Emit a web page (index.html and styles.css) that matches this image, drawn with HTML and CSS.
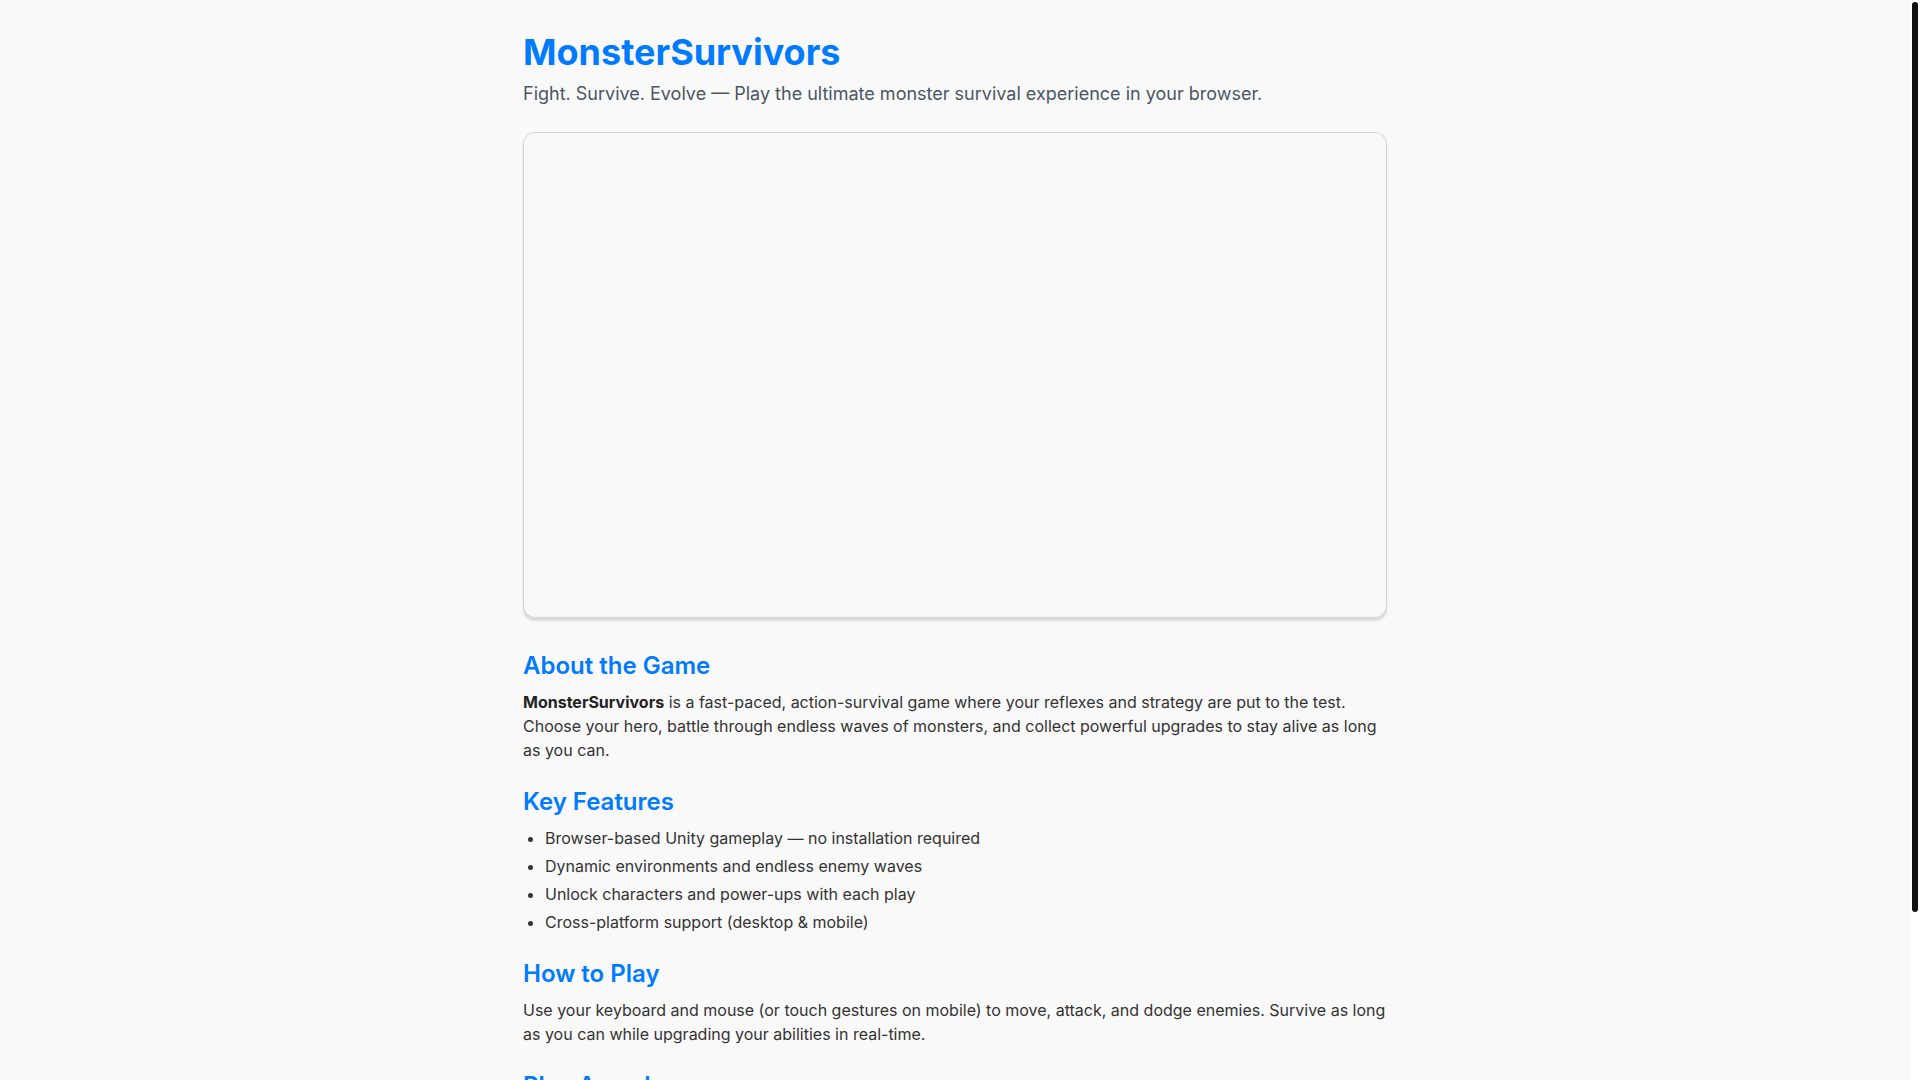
FILE: index.html
```html
<!DOCTYPE html>
<html lang="en">
<head>
<meta charset="utf-8">
<title>MonsterSurvivors</title>
<link rel="stylesheet" href="styles.css">
</head>
<body>
<main class="page">
  <header class="hero">
    <h1 class="title">MonsterSurvivors</h1>
    <p class="tagline">Fight. Survive. Evolve — Play the ultimate monster survival experience in your browser.</p>
  </header>

  <div class="game-frame"></div>

  <section class="section">
    <h2 class="section-title">About the Game</h2>
    <p class="text"><strong>MonsterSurvivors</strong> is a fast-paced, action-survival game where your reflexes and strategy are put to the test. Choose your hero, battle through endless waves of monsters, and collect powerful upgrades to stay alive as long as you can.</p>
  </section>

  <section class="section">
    <h2 class="section-title">Key Features</h2>
    <ul class="features">
      <li>Browser-based Unity gameplay — no installation required</li>
      <li>Dynamic environments and endless enemy waves</li>
      <li>Unlock characters and power-ups with each play</li>
      <li>Cross-platform support (desktop &amp; mobile)</li>
    </ul>
  </section>

  <section class="section">
    <h2 class="section-title">How to Play</h2>
    <p class="text">Use your keyboard and mouse (or touch gestures on mobile) to move, attack, and dodge enemies. Survive as long as you can while upgrading your abilities in real-time.</p>
  </section>

  <section class="section">
    <h2 class="section-title">Play Anywhere</h2>
    <p class="text">MonsterSurvivors runs directly in modern browsers on desktop and mobile devices. No downloads, no sign-ups — just open the page and start surviving.</p>
  </section>

  <footer class="footer">© 2025 MonsterSurvivors. All rights reserved.</footer>
</main>

<div class="scrollbar" aria-hidden="true">
  <div class="scrollbar-thumb"></div>
</div>
</body>
</html>
```

FILE: styles.css
```css
html {
  background: #f9f9f9;
}

body {
  margin: 0;
  padding-right: 10px;
  background: #f9f9f9;
  font-family: Inter, "Noto Sans", "Liberation Sans", sans-serif;
  color: #333333;
}

.scrollbar {
  position: fixed;
  top: 0;
  right: 0;
  width: 10px;
  height: 100vh;
  background: #ffffff;
}

.scrollbar-thumb {
  position: absolute;
  top: 2px;
  left: 2px;
  width: 6px;
  height: 910px;
  border-radius: 3px;
  background: #111111;
}

.page {
  width: 864px;
  margin: 0 auto;
  padding: 31px 0 40px;
}

.title {
  margin: 0 0 6px;
  font-size: 36px;
  line-height: 1.2;
  font-weight: 700;
  color: #007bff;
}

.tagline {
  margin: 0 0 25px;
  font-size: 18px;
  line-height: 1.5;
  color: #4b5563;
}

.game-frame {
  aspect-ratio: 16 / 9;
  box-sizing: border-box;
  border: 1px solid #d4d4d4;
  border-radius: 12px;
  background: #f9f9f9;
  box-shadow: 0 3px 2px rgba(0, 0, 0, 0.12);
  margin-bottom: 34px;
}

.section-title {
  margin: 26px 0 9px;
  font-size: 24px;
  line-height: 1.2;
  font-weight: 600;
  color: #007bff;
}

.section:first-of-type .section-title {
  margin-top: 0;
}

.text {
  margin: 0 0 16px;
  font-size: 16px;
  line-height: 1.5;
}

.text strong {
  font-weight: 700;
  color: #222222;
}

.features {
  margin: 0 0 16px;
  padding-left: 22px;
  font-size: 16px;
  line-height: 1.5;
}

.features li {
  margin-bottom: 4px;
}

.footer {
  margin-top: 40px;
  font-size: 14px;
  color: #6b7280;
}
```
